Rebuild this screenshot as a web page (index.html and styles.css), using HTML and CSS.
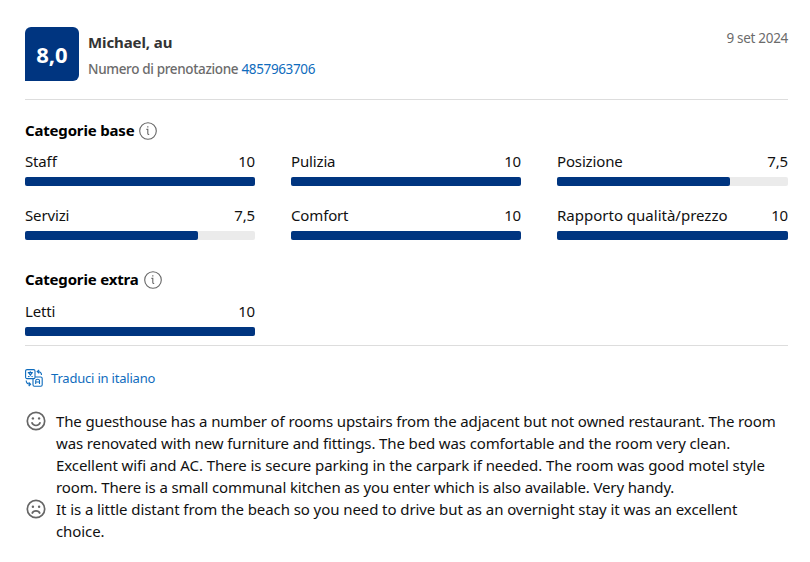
FILE: index.html
```
<!DOCTYPE html>
<html lang="it">
<head>
  <meta charset="UTF-8" />
  <meta name="viewport" content="width=device-width, initial-scale=1.0" />
  <title>Recensione</title>
  <link rel="stylesheet" href="styles.css">
</head>
<body>
  <article class="review">
    <header class="review-header">
      <div class="score">8,0</div>
      <div class="guest">
        <div class="guest-name">Michael, au</div>
        <div class="booking">
          <span class="booking-label">Numero di prenotazione</span>
          <a class="booking-link" href="#">4857963706</a>
        </div>
      </div>
      <div class="date">9 set 2024</div>
    </header>

    <section class="ratings">
      <h3 class="ratings-title">
        <span>Categorie base</span>
        <svg class="info" viewBox="0 0 18 18"><circle cx="9" cy="9" r="8.3"/><path d="M7.4 7.4h1.4v4.2q0 1 1.4 .9"/><path d="M8.2 4.9h1.2"/></svg>
      </h3>
      <div class="grid">
        <div class="item">
          <div class="item-text"><span>Staff</span><span>10</span></div>
          <div class="bar"><div class="fill" style="width: 100%"></div></div>
        </div>
        <div class="item">
          <div class="item-text"><span>Pulizia</span><span>10</span></div>
          <div class="bar"><div class="fill" style="width: 100%"></div></div>
        </div>
        <div class="item">
          <div class="item-text"><span>Posizione</span><span>7,5</span></div>
          <div class="bar"><div class="fill" style="width: 75%"></div></div>
        </div>
        <div class="item">
          <div class="item-text"><span>Servizi</span><span>7,5</span></div>
          <div class="bar"><div class="fill" style="width: 75%"></div></div>
        </div>
        <div class="item">
          <div class="item-text"><span>Comfort</span><span>10</span></div>
          <div class="bar"><div class="fill" style="width: 100%"></div></div>
        </div>
        <div class="item">
          <div class="item-text"><span class="wide">Rapporto qualità/prezzo</span><span>10</span></div>
          <div class="bar"><div class="fill" style="width: 100%"></div></div>
        </div>
      </div>

      <h3 class="ratings-title extra">
        <span>Categorie extra</span>
        <svg class="info" viewBox="0 0 18 18"><circle cx="9" cy="9" r="8.3"/><path d="M7.4 7.4h1.4v4.2q0 1 1.4 .9"/><path d="M8.2 4.9h1.2"/></svg>
      </h3>
      <div class="grid">
        <div class="item">
          <div class="item-text"><span>Letti</span><span>10</span></div>
          <div class="bar"><div class="fill" style="width: 100%"></div></div>
        </div>
      </div>
    </section>

    <a class="translate" href="#">
      <svg class="translate-icon" viewBox="0 0 18 18">
        <rect x=".6" y=".6" width="9.4" height="9" rx="1.4"/>
        <path d="M2.8 3.6h5M5.3 2.3v1.3M7 3.8Q6 6.5 3 7.8M3.7 3.8Q5 6.5 7.6 7.8"/>
        <path d="M10 8h5.800q1.400 0 1.400 1.400v6.400q0 1.400-1.400 1.400H9.400q-1.400 0-1.400-1.400V9.800"/>
        <path d="M10.700 15v-3.200q0-1.500 1.900-1.500t1.900 1.500V15M10.700 13h3.800"/>
        <path d="M16.500 6q0-3.500-4-3.500M14.200 .8l-2 1.700 2 1.900"/>
        <path d="M1.200 11.500q0 3.700 4.200 3.700M3.700 13.400l1.900 1.800-1.900 1.800"/>
      </svg>
      <span>Traduci in italiano</span>
    </a>

    <div class="comments">
      <div class="comment">
        <svg class="face" viewBox="0 0 20 20">
          <circle class="line" cx="10" cy="10" r="8.700"/>
          <circle cx="6.900" cy="7.400" r="1.200"/><circle cx="13.100" cy="7.400" r="1.200"/>
          <path class="line" d="M5.700 11.300q1.200 3.200 4.300 3.200t4.300-3.200"/>
        </svg>
        <p>
          The guesthouse has a number of rooms upstairs from the adjacent but not owned restaurant. The room<br>
          was renovated with new furniture and fittings. The bed was comfortable and the room very clean.<br>
          <span class="loose">Excellent wifi and AC. There is secure parking in the carpark if needed. The room was good motel style</span><br>
          room. There is a small communal kitchen as you enter which is also available. Very handy.
        </p>
      </div>
      <div class="comment">
        <svg class="face" viewBox="0 0 20 20">
          <circle class="line" cx="10" cy="10" r="8.700"/>
          <circle cx="6.900" cy="7.800" r="1.200"/><circle cx="13.100" cy="7.800" r="1.200"/>
          <path class="line" d="M6 14.600q1-2.700 4-2.700t4 2.700"/>
        </svg>
        <p class="loose">
          It is a little distant from the beach so you need to drive but as an overnight stay it was an excellent<br>
          choice.
        </p>
      </div>
    </div>
  </article>
</body>
</html>
```
FILE: styles.css
```
:root {
  --blue: #003580;
  --link: #0f6cbd;
}
* { box-sizing: border-box; }
body {
  margin: 0;
  background: #fff;
  color: #111;
  font-family: "Segoe UI", "Noto Sans", sans-serif;
  font-size: 15px;
  line-height: 22px;
}
a { color: var(--link); text-decoration: none; }
.review { padding: 27px 22px 0 25px; }
.review-header {
  display: flex;
  height: 73px;
  border-bottom: 1px solid #ddd;
}
.score {
  width: 54px;
  height: 54px;
  border-radius: 6px 6px 6px 0;
  background: var(--blue);
  color: #fff;
  font-size: 22px;
  font-weight: 700;
  line-height: 54px;
  text-align: center;
}
.guest { flex: 1; padding: 4px 0 0 9px; }
.guest-name {
  color: #333;
  font-weight: 700;
  letter-spacing: -0.1px;
}
.booking {
  padding-top: 5px;
  font-size: 13.5px;
  letter-spacing: -0.35px;
}
.booking-label { color: #6b6b6b; font-weight: 500; }
.date { color: #6b6b6b; font-size: 13.5px; letter-spacing: -0.3px; }
.ratings {
  height: 246px;
  padding-top: 19px;
  border-bottom: 1px solid #ddd;
}
.ratings-title {
  display: flex;
  align-items: center;
  gap: 5px;
  margin: 0 0 9px;
  font-size: 15px;
  font-weight: 700;
  color: #000;
  letter-spacing: -0.18px;
}
.ratings-title.extra { margin: 28px 0 10px; }
.info {
  width: 18px;
  height: 18px;
  margin-top: 1px;
  fill: none;
  stroke: #666;
  stroke-width: 1.1;
}
.grid {
  display: grid;
  grid-template-columns: 230px 230px 231px;
  gap: 18px 36px;
}
.item-text {
  display: flex;
  justify-content: space-between;
  height: 27px;
  letter-spacing: -0.15px;
}
.item-text .wide { letter-spacing: 0; }
.bar {
  height: 9px;
  border-radius: 2px;
  background: #ebebeb;
}
.fill {
  height: 9px;
  border-radius: 2px;
  background: var(--blue);
}
.translate {
  display: flex;
  align-items: center;
  gap: 8px;
  margin-top: 21px;
  font-size: 13px;
  letter-spacing: -0.2px;
}
.translate-icon {
  width: 18px;
  height: 18px;
  fill: none;
  stroke: var(--link);
  stroke-width: 1.1;
}
.comments { padding-top: 21px; }
.comment { display: flex; gap: 10px; padding-left: 1px; }
.comment p { margin: 0; white-space: nowrap; letter-spacing: -0.125px; }
.comment .loose { letter-spacing: -0.08px; }
.face {
  flex: none;
  width: 20px;
  height: 20px;
  margin-top: 1px;
  fill: #666;
}
.face .line { fill: none; stroke: #666; stroke-width: 1.7; }
```
